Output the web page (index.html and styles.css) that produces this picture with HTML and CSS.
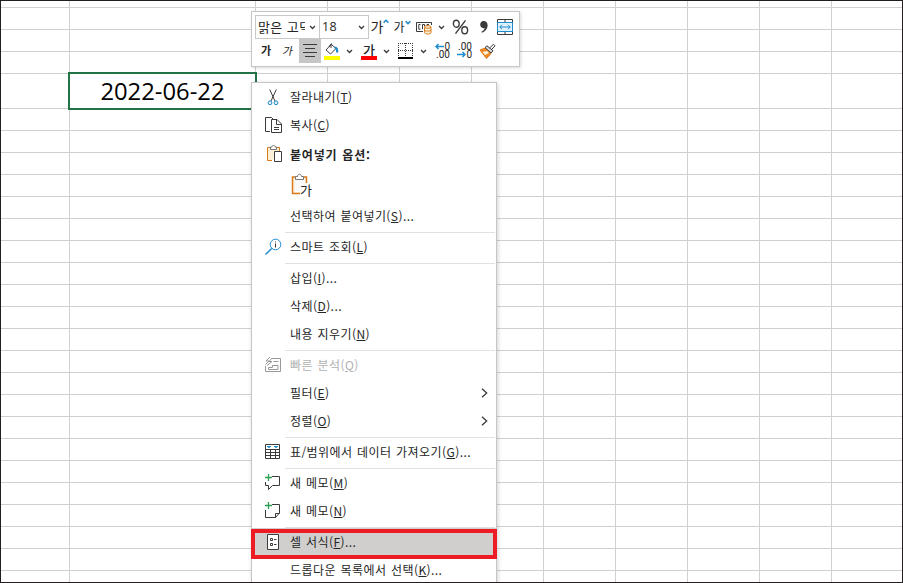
FILE: index.html
```html
<!DOCTYPE html>
<html lang="ko">
<head>
  <meta charset="UTF-8" />
  <meta name="viewport" content="width=device-width, initial-scale=1" />
  <title>셀 서식</title>

  <link rel="stylesheet" href="styles.css">
</head>
<body>
  <main class="window">
    <table class="sheet" id="sheet"></table>
    <div class="selected-cell">2022-06-22</div>

    <!-- Mini toolbar -->
    <div class="toolbar">
      <div class="tool-row">
        <div class="select font-select"><span>맑은 고딕</span><svg class="chev" viewBox="0 0 7 5"><path d="M1 1l2.5 2.5L6 1"/></svg></div>
        <div class="select size-select"><span>18</span><svg class="chev" viewBox="0 0 7 5"><path d="M1 1l2.5 2.5L6 1"/></svg></div>
        <div class="tool grow">가<svg width="6" height="5" viewBox="0 0 6 5"><path class="blue thick" d="M.6 3.6L3 1.2l2.400 2.400"/></svg></div>
        <div class="tool shrink">가<svg width="6" height="5" viewBox="0 0 6 5"><path class="blue thick" d="M.6 1.200L3 3.600l2.400-2.400"/></svg></div>
        <div class="tool"><svg width="18" height="16" viewBox="0 0 18 16">
          <path d="M8 12.500H1.500V3.500H16.500V6"/><path d="M5.500 5.500H3.800V10.200H5.500M7.500 10.200V5.500H9.500V7M12 7V5.500H14"/>
          <path class="orange cream" d="M9.500 8.500v5c0 2 6.500 2 6.500 0v-5"/><ellipse class="orange cream" cx="12.700" cy="8" rx="3.300" ry="1.300"/><path class="orange" d="M9.500 10.800c0 1.700 6.500 1.700 6.500 0"/>
        </svg></div>
        <div class="tool narrow"><svg class="chev" viewBox="0 0 7 5"><path d="M1 1l2.5 2.5L6 1"/></svg></div>
        <div class="tool percent"><svg width="17" height="16" viewBox="0 0 17 16"><ellipse cx="4.300" cy="4.700" rx="2.900" ry="3.500"/><ellipse cx="12.700" cy="11.300" rx="2.900" ry="3.500"/><path d="M13.500 1.300L3.500 14.700"/></svg></div>
        <div class="tool comma"><svg width="10" height="14" viewBox="0 0 10 14"><path class="solid" d="M4.600 1C7.300 1 8.600 2.900 8.600 5.200c0 3.500-2.200 6.300-5.700 7.500l-.5-1c2-1 3.100-2.300 3.300-3.700C3 8.800 1.200 7 1.200 4.600 1.200 2.500 2.600 1 4.600 1z"/></svg></div>
        <div class="tool merge"><svg width="16" height="16" viewBox="0 0 16 16"><path d="M.5 .5h15v15H.5zM8 .5v3M8 12.500v3"/><path class="blue pale" d="M.5 3.500h15v9H.5z"/><path class="blue" d="M2.800 8h10.400M5 5.800L2.800 8 5 10.200M11 5.800L13.200 8 11 10.200"/></svg></div>
      </div>
      <div class="tool-row">
        <div class="tool bold">가</div>
        <div class="tool italic">가</div>
        <div class="tool active"><svg width="16" height="16" viewBox="0 0 16 16"><path d="M1 1.500h14M3 5.500h10M1 9.500h14M3 13.500h10"/></svg></div>
        <div class="tool"><svg width="18" height="18" viewBox="0 0 18 18"><path d="M8 2.500L3 8l4.500 4 5.500-5.500L8 2v4"/><path d="M6 5L8.500 1.500"/><path class="blue heavy-blue" d="M11.500 5.500c2.500 0 3 2 2.500 5"/><path class="yellow" d="M1 14h16v4H1z"/></svg></div>
        <div class="tool narrow"><svg class="chev" viewBox="0 0 7 5"><path d="M1 1l2.5 2.5L6 1"/></svg></div>
        <div class="tool font-color">가</div>
        <div class="tool narrow"><svg class="chev" viewBox="0 0 7 5"><path d="M1 1l2.5 2.5L6 1"/></svg></div>
        <div class="tool wide"><svg width="15" height="16" viewBox="0 0 15 16"><path class="dots" d="M0 .5h15M0 7.500h15M.5 0v14M7.500 0v14M14.500 0v14"/><path class="heavy" d="M0 15h15"/></svg></div>
        <div class="tool narrow"><svg class="chev" viewBox="0 0 7 5"><path d="M1 1l2.5 2.5L6 1"/></svg></div>
        <div class="tool wide decimals"><span><svg width="9" height="7" viewBox="0 0 9 7"><path class="blue thick" d="M9 3.500H1M3.500 1L1 3.500 3.500 6"/></svg>0</span><span>.00</span></div>
        <div class="tool decimals"><span>.00</span><span><svg width="9" height="7" viewBox="0 0 9 7"><path class="blue thick" d="M0 3.500h8M5.500 1L8 3.500 5.500 6"/></svg>0</span></div>
        <div class="tool"><svg width="17" height="16" viewBox="0 0 17 16"><path class="brush" d="M1 7l5-2 6 5.500-4.500 5z"/><path class="cream" stroke="none" d="M3.500 9l4.500-1 2 2-4 2z"/><path class="gray-fill" d="M6 4.500l2-1.700 6 5-2 2.200z"/><path d="M10.500 5l4-3.700 1.500 1.500-3.700 4"/></svg></div>
      </div>
    </div>

    <!-- Context menu -->
    <ul class="menu">
      <li class="item"><svg class="icon" viewBox="0 0 20 20"><path d="M6.700 2.500l5.300 11.500M13.300 2.500L8 14"/><circle class="blue pale" cx="7" cy="15.800" r="1.900"/><circle class="blue pale" cx="13" cy="15.800" r="1.900"/></svg><span>잘라내기(<u>T</u>)</span></li>
      <li class="item"><svg class="icon" viewBox="0 0 20 20"><path d="M7 16.500H2.500V2.500H8.500L10 4"/><path class="white" d="M8.500 4.500H14L18.500 9V17.500H8.500z"/><path d="M13.500 4.500V9.500H18.500M11 12.500h5M11 14.500h5"/></svg><span>복사(<u>C</u>)</span></li>
      <li class="item heading"><svg class="icon" viewBox="0 0 20 20"><path class="orange cream" d="M9 15.500H4.500V2.500H16.500V6"/><path class="gray white" d="M7.500 4.500V2H9C9-.2 12-.2 12 2H13.500V4.500z"/><path class="white" d="M11.500 6.500h7v10h-7z"/></svg><span>붙여넣기 옵션:</span></li>
      <li class="paste-row"><svg width="22" height="24" viewBox="0 0 22 24"><path class="orange thick cream" d="M10 20.500H2.500V4H16.500V10"/><path class="paper" d="M4.500 6h10.500v7l-4 6H4.500z"/><path class="gray white" d="M5.500 6.500V3.500H7.500C7.500 .5 11.500 .5 11.500 3.500h2V6.500z"/></svg><span>가</span></li>
      <li class="item"><span>선택하여 붙여넣기(<u>S</u>)...</span></li>
      <li class="line"></li>
      <li class="item"><svg class="icon" viewBox="0 0 20 20"><circle class="blue" cx="12.500" cy="7.500" r="5.300"/><path class="blue thick" d="M8.700 11.500L2.500 17.500"/><path d="M12.500 4.500v1M12.500 6.500v4"/></svg><span>스마트 조회(<u>L</u>)</span></li>
      <li class="line"></li>
      <li class="item"><span>삽입(<u>I</u>)...</span></li>
      <li class="item"><span>삭제(<u>D</u>)...</span></li>
      <li class="item"><span>내용 지우기(<u>N</u>)</span></li>
      <li class="line"></li>
      <li class="item disabled"><svg class="icon" viewBox="0 0 20 20"><path d="M9 3.500h8.500v13h-15V11"/><path d="M5.500 14.500v-2h4v-2h5.500v4z"/><path d="M10.500 6.500h5M7 2L3 6h3L2.500 9.500M9 3L6 6.500h3L4 10.500"/></svg><span>빠른 분석(<u>Q</u>)</span></li>
      <li class="item"><span>필터(<u>E</u>)</span><svg class="arrow" viewBox="0 0 7 10"><path d="M1 .7L5.700 5 1 9.300"/></svg></li>
      <li class="item"><span>정렬(<u>O</u>)</span><svg class="arrow" viewBox="0 0 7 10"><path d="M1 .7L5.700 5 1 9.300"/></svg></li>
      <li class="line"></li>
      <li class="item"><svg class="icon" viewBox="0 0 20 20"><path d="M2.500 2.500h14v14h-14zM2.500 7.500h14M2.500 10.500h14M2.500 13.500h14M7.500 7.500v9M12.500 7.500v9"/><path class="blue" d="M4 4.500h4M11 4.500h4M5 5.300h2M12 5.300h2"/></svg><span>표/범위에서 데이터 가져오기(<u>G</u>)...</span></li>
      <li class="line"></li>
      <li class="item"><svg class="icon" viewBox="0 0 20 20"><path d="M9 3.500h7.500v9H9.500L5.500 16.500v-4h-3V9"/><path class="green" d="M5.500 1v7M2 4.500h7"/></svg><span>새 메모(<u>M</u>)</span></li>
      <li class="item"><svg class="icon" viewBox="0 0 20 20"><path d="M9 3.500h7.500V12l-4 4.500h-10V9M12.500 16.500V12.500h4"/><path class="green" d="M5.500 1v7M2 4.500h7"/></svg><span>새 메모(<u>N</u>)</span></li>
      <li class="line"></li>
      <li class="item hover"><svg class="icon" viewBox="0 0 20 20"><path class="white" d="M4.500 2.500h11v15h-11z"/><path d="M7.500 6.500h2v2h-2zM7.500 11.500h2v2h-2zM11 7.500h2.500M11 12.500h2.500"/></svg><span>셀 서식(<u>F</u>)...</span></li>
      <li class="item"><span>드롭다운 목록에서 선택(<u>K</u>)...</span></li>
    </ul>
    <div class="highlight"></div>
  </main>

  <script src="script.js"></script>
</body>
</html>
```
FILE: styles.css
```css
*, *::before, *::after {
  box-sizing: border-box;
}

body {
  margin: 0;
  font-family: 'Noto Sans CJK KR', sans-serif;
  font-size: 12px;
  color: #262626;
}

.window {
  position: relative;
  width: 903px;
  height: 583px;
  border: 1px solid #231f20;
  background: #fff;
  overflow: hidden;
}

/* Sheet grid */
.sheet {
  width: 901px;
  table-layout: fixed;
  border-collapse: separate;
  border-spacing: 0;
}

.sheet td {
  height: 22px;
  padding: 0;
  border-right: 1px solid #d0d0d0;
  border-bottom: 1px solid #d0d0d0;
}

.sheet td:last-child { border-right: none; }
.sheet tr:first-child td { height: 7px; }
.sheet tr.tall td { height: 35px; }
.sheet tr:last-child td { height: 11px; border-bottom: none; }

.selected-cell {
  position: absolute;
  left: 67px;
  top: 71px;
  width: 189px;
  height: 38px;
  border: 2px solid #217346;
  background: #fff;
  color: #000;
  font-family: 'Open Sans', sans-serif;
  font-size: 23.8px;
  line-height: 35px;
  text-align: center;
}

/* Shared icon strokes */
svg {
  flex: none;
  fill: none;
  stroke: #3b3b3b;
  stroke-width: 1;
}

.blue { stroke: #1e8bcd; }
.orange { stroke: #d87a1d; }
.green { stroke: #2f9e54; stroke-width: 1.3; }
.gray { stroke: #777; }
.thick { stroke-width: 1.5; }
.heavy-blue { stroke-width: 2.2; }
.white { fill: #fff; }
.pale { fill: #e1f1fb; }
.cream { fill: #fdf0d8; }
.solid { fill: #3b3b3b; stroke: none; }
.yellow { fill: #ff0; stroke: none; }
.gray-fill { fill: #ddd; }
.paper { fill: #fafafa; stroke: none; }
.brush { fill: #f08a24; stroke: #e07a14; }
.dots { stroke-dasharray: 1 1; }
.heavy { stroke: #000; stroke-width: 2; }

/* Mini toolbar */
.toolbar {
  position: absolute;
  left: 250px;
  top: 10px;
  width: 269px;
  height: 56px;
  padding: 3px;
  border: 1px solid #c6c6c6;
  background: #fff;
  box-shadow: 1px 1px 3px rgba(0, 0, 0, 0.15);
}

.tool-row {
  display: flex;
  height: 24px;
}

.tool, .select {
  display: flex;
  flex: none;
  align-items: center;
}

.tool {
  justify-content: center;
  width: 22px;
  line-height: 1;
}

.select {
  justify-content: space-between;
  padding: 0 3px 2px 2px;
  border: 1px solid #c8c8c8;
  overflow: hidden;
  white-space: nowrap;
}

.font-select { width: 65px; }
.font-select span { width: 47px; overflow: hidden; font-size: 13px; letter-spacing: 0.4px; }
.size-select { width: 50px; margin-left: -1px; }
.size-select span { font-family: 'Open Sans', sans-serif; font-size: 12.5px; letter-spacing: 0.3px; }

.chev {
  width: 7px;
  height: 5px;
  stroke-width: 1.3;
}

.select .chev { margin-top: 3px; }

.grow, .shrink { align-items: flex-start; padding-top: 4px; }
.grow { font-size: 14px; }
.shrink { font-size: 12px; padding-top: 6px; }
.shrink svg { margin-top: -1px; }
.narrow { width: 13px; }
.percent { width: 25px; }
.comma, .merge { width: 21px; }
.wide { width: 24px; }
.percent svg { stroke-width: 1.4; }
.bold { font-weight: bold; font-size: 11px; padding-bottom: 2px; }
.italic { font-size: 11px; padding-bottom: 2px; transform: skewX(-12deg); }
.active { background: #c6c6c6; }

.font-color {
  flex-direction: column;
  width: 24px;
  padding-left: 2px;
  font-size: 13px;
  font-weight: 500;
}

.font-color::after {
  content: '';
  width: 16px;
  height: 4px;
  background: #f00;
}

.decimals {
  flex-direction: column;
  align-items: flex-start;
  padding-left: 4px;
  font-family: 'Roboto', sans-serif;
  font-size: 10px;
  line-height: 8px;
}

.decimals + .decimals { padding-left: 2px; }

.decimals span {
  display: flex;
  justify-content: flex-end;
  width: 16px;
}

/* Context menu */
.menu {
  position: absolute;
  left: 250px;
  top: 81px;
  width: 246px;
  margin: 0;
  padding: 0;
  border: 1px solid #c6c6c6;
  background: #fff;
  box-shadow: 1px 1px 4px rgba(0, 0, 0, 0.18);
  list-style: none;
}

.item {
  display: flex;
  align-items: center;
  height: 28px;
  padding-left: 38px;
  letter-spacing: 0.43px;
  word-spacing: 0.8px;
  white-space: nowrap;
}

.item span { padding-bottom: 2px; }
.item u { text-underline-offset: 1px; }

.icon {
  width: 20px;
  height: 20px;
  margin-left: -27px;
  margin-right: 7px;
}

.heading {
  height: 32px;
  font-weight: bold;
  letter-spacing: 0.8px;
}

.paste-row {
  display: flex;
  height: 31px;
  padding: 2px 0 0 38px;
}

.paste-row span {
  margin: 9px 0 0 -12px;
  font-size: 13px;
  line-height: 15px;
}

.line {
  height: 3px;
  margin: 0 1px 0 33px;
  border-bottom: 1px solid #e1e1e1;
}

.arrow {
  width: 7px;
  height: 10px;
  margin-left: auto;
  margin-right: 8px;
  stroke-width: 1.3;
}

.disabled { color: #b1b1b1; }
.disabled svg { stroke: #999; }
.hover { background: #d0cfce; }

.highlight {
  position: absolute;
  left: 250px;
  top: 528px;
  width: 246px;
  height: 30px;
  border: 4px solid #ed1c24;
}
```
FILE: script.js
```js
// Empty worksheet cells: one partial row and column on each edge
const colWidths = [69, 186, 72, 72, 72, 72, 72, 72, 72, 72, 70];
const rowCount = 27;
const sheet = document.getElementById('sheet');

for (let r = 0; r < rowCount; r++) {
  const row = sheet.insertRow();
  if (r === 4) row.className = 'tall';
  colWidths.forEach((width) => {
    const cell = row.insertCell();
    if (r === 0) cell.width = width;
  });
}
```
